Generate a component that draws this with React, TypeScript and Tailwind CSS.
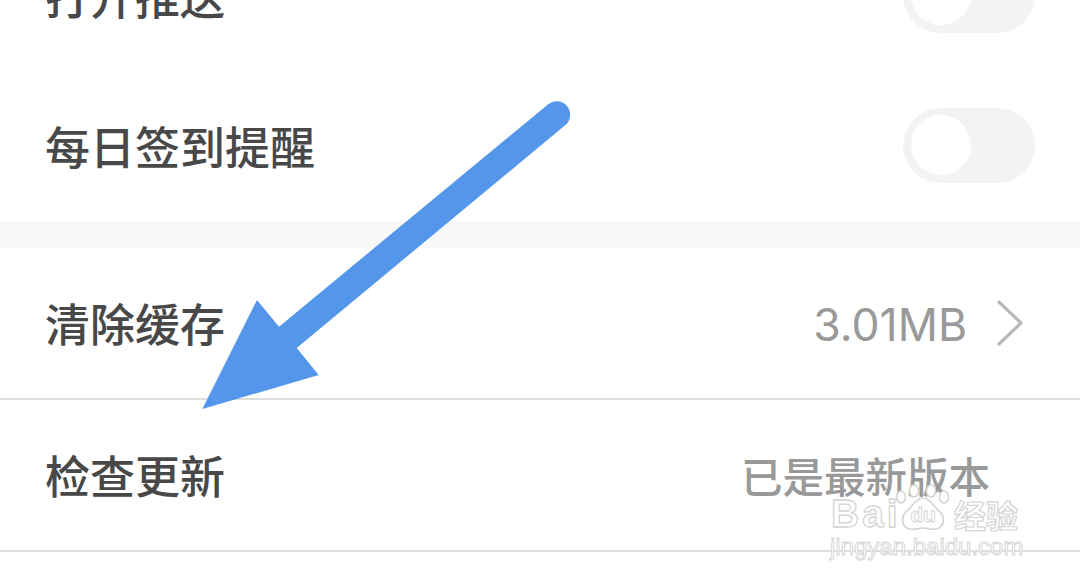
import React from 'react';

const cjk = "font-['PingFang_SC','Noto_Sans_CJK_SC','Noto_Sans',sans-serif]";

const Toggle: React.FC = () => (
  <div className="mb-[2px] flex h-[75px] w-[132px] items-center rounded-full bg-[#f3f3f3] pl-2">
    <div className="h-[60px] w-[60px] rounded-full bg-white" />
  </div>
);

const Arrow: React.FC = () => (
  <svg className="absolute left-0 top-0" width="1080" height="584" viewBox="0 0 1080 584">
    <path d="M548.5 104 a13.5 13.5 0 0 1 17.5 20.5 L296.7 348 L318.7 375 L202.3 409 L257 300 L279 326.7 Z" fill="#5496e9" />
  </svg>
);

// baidu watermark, white letters with a thin grey edge
const Watermark: React.FC = () => (
  <div className="absolute left-[830px] top-[484px] flex w-[192px] flex-col text-white">
    <div className="flex h-[50px] items-end">
      <span className="w-[63px] pl-[1px] font-['Liberation_Sans',sans-serif] text-[39px] font-bold leading-[40px] tracking-[3px] [-webkit-text-stroke:1.3px_#d4d4d4]">Bai</span>
      <span className="relative flex h-[50px] w-[60px] items-end justify-center">
        <svg className="absolute left-0 top-0" width="60" height="50" viewBox="0 0 60 50" fill="#fff" stroke="#d4d4d4" strokeWidth="1.6">
          <ellipse cx="8" cy="13" rx="4.5" ry="6" />
          <ellipse cx="21" cy="7" rx="4.5" ry="6" />
          <ellipse cx="38" cy="7" rx="4.5" ry="6" />
          <ellipse cx="51" cy="13" rx="4.5" ry="6" />
          <path d="M30 14 C23 14 20 22 15 26 C8 31 7 43 17 45 C22 46 26 44 30 44 C34 44 38 46 43 45 C53 43 52 31 45 26 C40 22 37 14 30 14 Z" />
        </svg>
        <span className="relative mb-[9px] font-['Liberation_Sans',sans-serif] text-[21px] font-bold leading-none [-webkit-text-stroke:0.9px_#d4d4d4]">du</span>
      </span>
      <span className={`${cjk} mb-[4px] ml-[1px] text-[32px] font-bold leading-none [-webkit-text-stroke:1.2px_#d4d4d4]`}>经验</span>
    </div>
    <div className="mt-[1px] whitespace-nowrap font-['Liberation_Sans',sans-serif] text-[24px] leading-none [-webkit-text-stroke:0.9px_#d4d4d4]">jingyan.baidu.com</div>
  </div>
);

export default function App() {
  return (
    <div className={`${cjk} relative h-[584px] w-[1080px] overflow-hidden bg-white`}>
      <div className="mt-[-79px]">
        <div className="flex h-[150px] items-center justify-between pl-[45px] pr-[45px]">
          <span className="text-[45px] font-medium text-[#484848]">打开推送</span>
          <Toggle />
        </div>
        <div className="flex h-[150px] items-center justify-between pl-[45px] pr-[45px]">
          <span className="text-[45px] font-medium text-[#484848]">每日签到提醒</span>
          <Toggle />
        </div>
        <div className="h-[27px] bg-[#f8f8f8]" />
        <div className="flex h-[152px] items-center justify-between border-b-2 border-[#dedede] pl-[45px] pr-[57px]">
          <span className="text-[45px] font-medium text-[#484848]">清除缓存</span>
          <div className="flex items-center gap-[30px]">
            <span className="mt-[4px] font-['Inter',sans-serif] text-[44.5px] text-[#999]">3.01MB</span>
            <svg width="26" height="46" viewBox="0 0 26 46" fill="none" stroke="#b8b8b8" strokeWidth="3.2" strokeLinecap="round" strokeLinejoin="round">
              <path d="M2 2 L24 23 L2 44" />
            </svg>
          </div>
        </div>
        <div className="flex h-[152px] items-center justify-between border-b-2 border-[#dedede] pl-[45px] pr-[90px]">
          <span className="text-[45px] font-medium text-[#484848]">检查更新</span>
          <span className="text-[41.5px] font-medium text-[#999]">已是最新版本</span>
        </div>
      </div>
      <Arrow />
      <Watermark />
    </div>
  );
}
